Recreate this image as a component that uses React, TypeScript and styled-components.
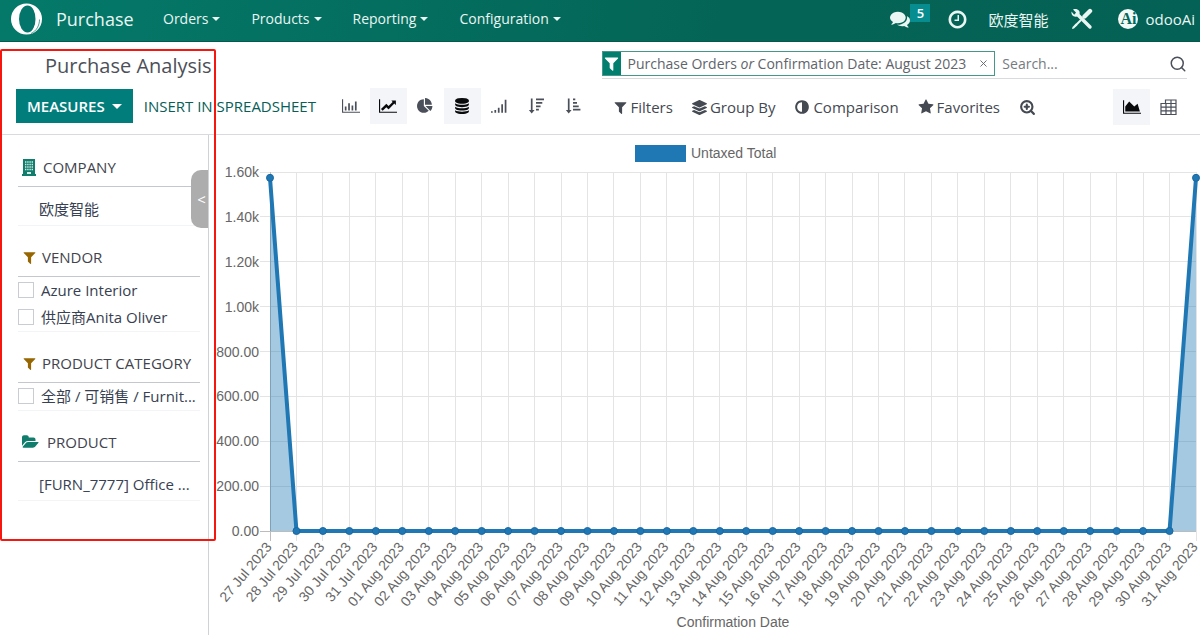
import React, { useLayoutEffect, useRef, useState } from "react";
import styled, { createGlobalStyle, css } from "styled-components";
import { FaLayerGroup } from "react-icons/fa";
import { Search, X, ZoomIn } from "lucide-react";

const GlobalStyle = createGlobalStyle`
  *, *::before, *::after { box-sizing: border-box; }
  body { margin: 0; background: #fff; color: #374151; font-family: "Open Sans", "Noto Sans CJK SC", sans-serif; font-size: 15px; }
  button, input { font: inherit; color: inherit; }
  button { border: 0; background: none; padding: 0; cursor: pointer; }
  svg { display: block; flex: none; }
`;

const FA = {
  filter: "M1595 295q17 41-14 70l-493 493v742q0 42-39 59-13 5-25 5-27 0-45-19l-256-256q-19-19-19-45v-486l-493-493q-31-29-14-70 17-39 59-39h1280q42 0 59 39z",
  database: "M896 768q237 0 443-43t325-127v170q0 69-103 128t-280 93.5-385 34.5-385-34.5-280-93.5-103-128v-170q119 84 325 127t443 43zm0 768q237 0 443-43t325-127v170q0 69-103 128t-280 93.5-385 34.5-385-34.5-280-93.5-103-128v-170q119 84 325 127t443 43zm0-384q237 0 443-43t325-127v170q0 69-103 128t-280 93.5-385 34.5-385-34.5-280-93.5-103-128v-170q119 84 325 127t443 43zm0-1152q208 0 385 34.5t280 93.5 103 128v128q0 69-103 128t-280 93.5-385 34.5-385-34.5-280-93.5-103-128v-128q0-69 103-128t280-93.5 385-34.5z",
  line: "M2048 1536v128h-2048v-1536h128v1408h1920zm-128-1248v435q0 21-19.5 29.5t-35.5-7.5l-121-121-633 633q-10 10-23 10t-23-10l-233-233-416 416-192-192 585-585q10-10 23-10t23 10l233 233 464-464-121-121q-16-16-7.5-35.5t29.5-19.5h435q14 0 23 9t9 23z",
  bar: "M512 960v448h-192v-448h192zm384-384v832h-192v-832h192zm1152 960v128h-2048v-1536h128v1408h1920zm-768-704v576h-192v-576h192zm384-448v1024h-192v-1024h192z",
  area: "M2048 1536v128h-2048v-1536h128v1408h1920zm-384-1024l256 896h-1664v-576l448-576 576 576z",
  pie: "M768 890l546 546q-106 108-247.5 168t-298.5 60q-209 0-385.5-103t-279.5-279.5-103-385.5 103-385.5 279.5-279.5 385.5-103v762zm187 6h773q0 157-60 298.5t-168 247.5zm709-128h-768v-768q209 0 385.5 103t279.5 279.5 103 385.5z",
  signal: "M0 1472h192v192h-192zM384 1344h192v320h-192zM768 1088h192v576h-192zM1152 704h192v960h-192zM1536 192h192v1472h-192z",
  sortDesc: "M320 64h192v1280h224l-320 384-320-384h224zM896 64h896v192h-896zM896 448h704v192h-704zM896 832h512v192h-512zM896 1216h320v192h-320z",
  sortAsc: "M320 64h192v1280h224l-320 384-320-384h224zM896 64h256v192h-256zM896 448h448v192h-448zM896 832h640v192h-640zM896 1216h832v192h-832z",
  comments: "M1408 768q0 139-94 257t-256.5 186.5-353.5 68.5q-86 0-176-16-124 88-278 128-36 9-86 16h-3q-11 0-20.5-8t-11.5-21q-1-3-1-6.5t.5-6.5 2-6l2.5-5 3.5-5.5 4-5 4.5-5 4-4.5q5-6 23-25t26-29.5 22.5-29 25-38.5 20.5-44q-124-72-195-177t-71-224q0-139 94-257t256.5-186.5 353.5-68.5 353.5 68.5 256.5 186.5 94 257zm384 256q0 120-71 224.5t-195 176.5q10 24 20.5 44t25 38.5 22.5 29 26 29.5 23 25q1 1 4 4.5t4.5 5 4 5 3.5 5.5l2.5 5 2 6 .5 6.5-1 6.5q-3 14-13 22t-22 7q-50-7-86-16-154-40-278-128-90 16-176 16-271 0-472-132 58 4 88 4 161 0 309-45t264-129q125-92 192-212t67-254q0-77-23-152 129 71 204 178t75 230z",
  clock: "M1024 544v448q0 14-9 23t-23 9h-320q-14 0-23-9t-9-23v-64q0-14 9-23t23-9h224v-352q0-14 9-23t23-9h64q14 0 23 9t9 23zm416 352q0-148-73-273t-198-198-273-73-273 73-198 198-73 273 73 273 198 198 273 73 273-73 198-198 73-273zm224 0q0 209-103 385.5t-279.5 279.5-385.5 103-385.5-103-279.5-279.5-103-385.5 103-385.5 279.5-279.5 385.5-103 385.5 103 279.5 279.5 103 385.5z",
  star: "M1728 647q0 22-26 48l-363 354 86 500q1 7 1 20 0 21-10.5 35.5t-30.5 14.5q-19 0-40-12l-449-236-449 236q-22 12-40 12-21 0-31.5-14.5t-10.5-35.5q0-6 2-20l86-500-364-354q-25-27-25-48 0-37 56-46l502-73 225-455q19-41 49-41t49 41l225 455 502 73q56 9 56 46z",
  adjust: "M896 1440v-1088q-148 0-273 73t-198 198-73 273 73 273 198 198 273 73zm768-544q0 209-103 385.5t-279.5 279.5-385.5 103-385.5-103-279.5-279.5-103-385.5 103-385.5 279.5-279.5 385.5-103 385.5 103 279.5 279.5 103 385.5z",
  folder: "M1879 952q0 31-31 66l-336 396q-43 51-120.5 86.5t-143.5 35.5h-1088q-34 0-60.5-13t-26.5-43q0-31 31-66l336-396q43-51 120.5-86.5t143.5-35.5h1088q34 0 60.5 13t26.5 43zm-343-344v160h-832q-94 0-197 47.5t-164 119.5l-337 396-5 6q0-4-.5-12.5t-.5-12.5v-960q0-92 66-158t158-66h320q92 0 158 66t66 158v32h544q92 0 158 66t66 158z",
};

function Icon({ name, size = 16, color = "currentColor" }: { name: keyof typeof FA; size?: number; color?: string }) {
  const wide = ["line", "bar", "area", "folder"].includes(name);
  return (
    <svg width={wide ? Math.round((size * 8) / 7) : size} height={size} viewBox={`0 0 ${wide ? 2048 : 1792} 1792`} fill={color} aria-hidden="true">
      <path d={FA[name]} />
    </svg>
  );
}

const Page = styled.div`
  position: relative;
  min-height: 100vh;
  display: flex;
  flex-direction: column;
  overflow: hidden;
`;

const NavBar = styled.header`
  display: flex;
  align-items: center;
  height: 42px;
  padding: 0 5px 3px 10px;
  color: #eaf6f3;
  background: linear-gradient(100deg, #04796a, #046556 60%, #046155);
  border-bottom: 1px solid #04594d;
  white-space: nowrap;
`;

const Brand = styled.a`
  display: flex;
  align-items: center;
  gap: 13px;
  width: 148px;
  color: inherit;
  text-decoration: none;
  font-size: 18px;
`;

const Menu = styled.nav`
  display: flex;
  gap: 21px;
  flex: 1;
  font-size: 14px;
`;

const MenuButton = styled.button`
  display: flex;
  align-items: center;
  gap: 4px;
  padding: 0 5px;
  line-height: 32px;
`;

const Caret = styled.span<{ $size?: number }>`
  border: ${(p) => p.$size ?? 4}px solid transparent;
  border-top-color: currentColor;
  border-bottom: 0;
`;

const SysTray = styled.div`
  display: flex;
  align-items: center;
  color: #eaf6f3;
`;

const TrayButton = styled.button<{ $gap: number }>`
  display: flex;
  align-items: center;
  gap: 7px;
  margin-left: ${(p) => p.$gap}px;
`;

const Messages = styled.button`
  display: flex;
  align-items: center;
`;

const Count = styled.span`
  align-self: flex-start;
  width: 20px;
  margin-top: -5px;
  color: #fff;
  background: #078c8f;
  font-size: 13px;
  font-weight: 600;
  line-height: 18px;
  text-align: center;
`;

const ControlPanel = styled.section`
  display: flex;
  justify-content: space-between;
  height: 93px;
  padding: 8px 13px 8px 16px;
  border-bottom: 1px solid #d8dadd;
`;

const PanelSide = styled.div<{ $wide?: boolean }>`
  display: flex;
  flex-direction: column;
  ${(p) => p.$wide && css`
    width: 50%;
    padding-top: 1px;
  `}
`;

const Title = styled.h1`
  margin: 0 0 6px;
  padding-left: 29px;
  color: #4c5058;
  font-size: 20px;
  font-weight: 400;
  line-height: 32px;
`;

const Tools = styled.div`
  display: flex;
  align-items: center;
`;

const Measures = styled.button`
  display: flex;
  align-items: center;
  gap: 7px;
  height: 34px;
  padding: 0 11px;
  color: #fff;
  background: #017e7c;
  font-weight: 600;
`;

const Spreadsheet = styled.button`
  width: 200px;
  padding-left: 11px;
  color: #066058;
  font-weight: 500;
  text-align: left;
  white-space: nowrap;
`;

const ToolButton = styled.button<{ $active?: boolean }>`
  display: grid;
  place-items: center;
  width: 37px;
  height: 36px;
  color: ${(p) => (p.$active ? "#090a0c" : "#4a4f59")};
  background: ${(p) => (p.$active ? "#f4f5f9" : "transparent")};
`;

const SearchBar = styled.div`
  display: flex;
  align-items: center;
  height: 28px;
  padding-bottom: 2px;
  border-bottom: 1px solid #d8dadd;
  color: #60646b;
  font-size: 14px;
`;

const Facet = styled.div`
  display: flex;
  align-items: center;
  height: 25px;
  padding-right: 5px;
  border: 1px solid #45978c;
  white-space: nowrap;
`;

const FacetIcon = styled.span`
  display: grid;
  place-items: center;
  align-self: stretch;
  width: 18px;
  margin-right: 7px;
  color: #fff;
  background: #017e6d;
`;

const FacetRemove = styled.button`
  margin-left: 12px;
`;

const SearchInput = styled.input`
  flex: 1;
  min-width: 0;
  padding: 0 7px;
  border: 0;
  outline: 0;
  background: none;
  &::placeholder { color: #777b81; }
`;

const SearchTools = styled.div`
  display: flex;
  align-items: center;
  gap: 19px;
  margin-top: 10px;
  padding-left: 11px;
`;

const SearchOption = styled.button`
  display: flex;
  align-items: center;
  gap: 3px;
  color: #444952;
  font-weight: 500;
  white-space: nowrap;
`;

const Views = styled.div`
  display: flex;
  margin-left: auto;
`;

const Content = styled.main`
  display: flex;
  flex: 1;
`;

const Sidebar = styled.aside`
  position: relative;
  flex: none;
  width: 209px;
  padding: 17px 8px 0 18px;
  border-right: 1px solid #cfd2d6;
`;

const Group = styled.section`
  margin-bottom: 16px;
`;

const GroupTitle = styled.h2<{ $gap: number }>`
  display: flex;
  align-items: center;
  gap: ${(p) => p.$gap}px;
  height: 35px;
  margin: 0;
  padding: 0 0 4px 4px;
  border-bottom: 1px solid #c4c7cb;
  color: #3f444d;
  font-size: 15px;
  font-weight: 500;
  white-space: nowrap;
`;

const GroupBody = styled.div`
  border-bottom: 1px solid #f3f4f5;
`;

const GroupItem = styled.button`
  display: block;
  width: 100%;
  padding: 7px 0 1px 21px;
  line-height: 30px;
  text-align: left;
  white-space: nowrap;
`;

const CheckRow = styled.label`
  display: flex;
  align-items: center;
  gap: 7px;
  height: 27px;
  padding-bottom: 2px;
  white-space: nowrap;
`;

const Check = styled.input`
  appearance: none;
  flex: none;
  width: 16px;
  height: 16px;
  margin: 0;
  border: 1px solid #c9ccd0;
  background: #fff;
`;

const Collapse = styled.button`
  position: absolute;
  top: 35px;
  right: 0;
  width: 17px;
  height: 58px;
  padding-left: 4px;
  border-radius: 10px 0 0 10px;
  color: #fff;
  background: #adadad;
`;

const Highlight = styled.div`
  position: absolute;
  top: 49px;
  left: 0;
  width: 216px;
  height: 492px;
  border: 2px solid #f5170f;
  border-radius: 2px;
  pointer-events: none;
`;

const ChartArea = styled.div`
  flex: 1;
  min-width: 0;
  font-family: "Liberation Sans", Arial, sans-serif;
  font-size: 14px;
`;

const pad = (n: number) => String(n).padStart(2, "0");
const days = [
  ...[27, 28, 29, 30, 31].map((d) => `${d} Jul 2023`),
  ...Array.from({ length: 31 }, (_, i) => `${pad(i + 1)} Aug 2023`),
];
const totals = days.map((_, i) => (i === 0 || i === days.length - 1 ? 1574 : 0));
const ticks = [1600, 1400, 1200, 1000, 800, 600, 400, 200, 0];
const tickLabel = (v: number) => (v >= 1000 ? `${(v / 1000).toFixed(2)}k` : v.toFixed(2));

function Chart() {
  const box = useRef<HTMLDivElement>(null);
  const [width, setWidth] = useState(991);
  useLayoutEffect(() => {
    const node = box.current!;
    const update = () => setWidth(node.clientWidth);
    update();
    const observer = new ResizeObserver(update);
    observer.observe(node);
    return () => observer.disconnect();
  }, []);

  const left = 61;
  const right = width - 4;
  const top = 37;
  const bottom = 396;
  const x = (i: number) => left + (i * (right - left)) / (days.length - 1);
  const y = (v: number) => bottom - (v * (bottom - top)) / 1600;
  const crisp = (n: number) => Math.floor(n) + 0.5;
  const points = totals.map((v, i) => `${x(i)},${y(v)}`).join(" ");
  const middle = (left + right) / 2;

  return (
    <ChartArea ref={box}>
      <svg width={width} height={500} role="img" aria-label="Untaxed Total by Confirmation Date">
        <rect x={middle - 98} y={10} width={51} height={17} fill="#1f77b4" />
        <text x={middle - 42} y={23} fill="#666">Untaxed Total</text>
        {ticks.map((v) => (
          <g key={v}>
            <line x1={left - 10} x2={right} y1={crisp(y(v))} y2={crisp(y(v))} stroke={v ? "#e4e4e4" : "#bcbcbc"} />
            <text x={left - 11} y={y(v) + 5} fill="#666" textAnchor="end">{tickLabel(v)}</text>
          </g>
        ))}
        {days.map((day, i) => (
          <g key={day}>
            <line x1={crisp(x(i))} x2={crisp(x(i))} y1={top} y2={bottom + 10} stroke={i ? "#e4e4e4" : "#bcbcbc"} />
            <text transform={`translate(${x(i)} ${bottom + 13}) rotate(-50)`} x={-1} y={4} fill="#666" textAnchor="end">{day}</text>
          </g>
        ))}
        <polygon points={`${left},${bottom} ${points} ${right},${bottom}`} fill="#1f77b4" fillOpacity={0.4} />
        <polyline points={points} fill="none" stroke="#1f77b4" strokeWidth={4} strokeLinejoin="round" />
        {totals.map((v, i) => (
          <circle key={i} cx={x(i)} cy={y(v)} r={3.5} fill="#1f77b4" stroke="#1a68a0" />
        ))}
        <text x={middle} y={492} fill="#666" textAnchor="middle">Confirmation Date</text>
      </svg>
    </ChartArea>
  );
}

function BuildingIcon() {
  return (
    <svg width="14" height="17" viewBox="0 0 14 17" aria-hidden="true">
      <path d="M1 0h12v15h1v2H0v-2h1z" fill="#117e6d" />
      <path d="M3 3h8M3 5.5h8M3 8h8M3 10.5h8" stroke="#d3ebe7" strokeWidth="1.3" strokeDasharray="1.4 .8" />
      <path d="M5 13h4v2H5z" fill="#d3ebe7" />
    </svg>
  );
}

function PivotIcon() {
  return (
    <svg width="17" height="17" viewBox="0 0 17 17" fill="none" stroke="#4a4f59" strokeWidth="1.2" aria-hidden="true">
      <path d="M5.500 4.500V1h10.500v14.500h-15v-11h15M1 8.200h15M1 11.800h15M6 4.500v11M11 1v14.500" />
    </svg>
  );
}

function CrossedTools() {
  return (
    <svg width="22" height="22" viewBox="0 0 22 22" fill="none" stroke="currentColor" aria-hidden="true">
      <path d="M6 6l13 13" strokeWidth="3.4" strokeLinecap="round" />
      <path d="M2 1.500l3 3-.5 1.500-1.500.5-2.500-3C0 7 2.500 9.500 6 8.500L8.500 6C9.500 3 6.500 0 2 1.500z" fill="currentColor" stroke="none" />
      <path d="M13.500 8.500l5.500-5.500" strokeWidth="4.4" strokeLinecap="round" />
      <path d="M10 12l-6 6" strokeWidth="2" />
      <path d="M5 15.500l1.500 1.500-3.500 3.500-2 .5.5-2z" fill="currentColor" stroke="none" />
    </svg>
  );
}

function BrandMark() {
  return (
    <svg width="33" height="32" viewBox="0 0 33 32" aria-hidden="true">
      <circle cx="16.500" cy="16" r="15.500" fill="#fff" />
      <ellipse cx="17.500" cy="16" rx="8.500" ry="13.500" fill="#04756a" />
      <path d="M21 2.500c5 3 7 8 7 13.500s-2.500 11-8 14c4-4 5.500-8.500 5.500-14S24 6.500 21 2.500z" fill="#fff" />
      <path d="M21 30.500c5.500-2.500 8.500-8 8.500-14" fill="none" stroke="#04756a" strokeWidth=".7" />
    </svg>
  );
}

const Avatar = styled.span`
  display: grid;
  place-items: center;
  width: 20px;
  height: 20px;
  border-radius: 50%;
  color: #04695b;
  background: #f2faf8;
  font-family: "Liberation Serif", serif;
  font-size: 16px;
  font-weight: 700;
  line-height: 20px;
`;

const graphTools: { name: keyof typeof FA; label: string; active?: boolean }[] = [
  { name: "bar", label: "Bar Chart" },
  { name: "line", label: "Line Chart", active: true },
  { name: "pie", label: "Pie Chart" },
  { name: "database", label: "Stacked", active: true },
  { name: "signal", label: "Cumulative" },
  { name: "sortDesc", label: "Descending" },
  { name: "sortAsc", label: "Ascending" },
];

export default function App() {
  return (
    <Page>
      <GlobalStyle />
      <NavBar>
        <Brand href="#">
          <BrandMark />
          Purchase
        </Brand>
        <Menu>
          {["Orders", "Products", "Reporting", "Configuration"].map((item) => (
            <MenuButton key={item}>{item}<Caret /></MenuButton>
          ))}
        </Menu>
        <SysTray>
          <Messages aria-label="Messages"><Icon name="comments" size={20} /><Count>5</Count></Messages>
          <TrayButton $gap={17} aria-label="Activities"><Icon name="clock" size={21} /></TrayButton>
          <TrayButton $gap={20}>欧度智能</TrayButton>
          <TrayButton $gap={23} aria-label="Developer tools"><CrossedTools /></TrayButton>
          <TrayButton $gap={25}><Avatar>Ai</Avatar>odooAi</TrayButton>
        </SysTray>
      </NavBar>
      <ControlPanel>
        <PanelSide>
          <Title>Purchase Analysis</Title>
          <Tools>
            <Measures>MEASURES <Caret $size={5} /></Measures>
            <Spreadsheet>INSERT IN SPREADSHEET</Spreadsheet>
            {graphTools.map((t) => (
              <ToolButton key={t.name} $active={t.active} aria-label={t.label}><Icon name={t.name} size={16} /></ToolButton>
            ))}
          </Tools>
        </PanelSide>
        <PanelSide $wide>
          <SearchBar>
            <Facet>
              <FacetIcon><Icon name="filter" size={17} /></FacetIcon>
              <span>Purchase Orders <em>or</em> Confirmation Date: August 2023</span>
              <FacetRemove aria-label="Remove"><X size={11} /></FacetRemove>
            </Facet>
            <SearchInput aria-label="Search" placeholder="Search..." />
            <Search size={18} color="#4a4f59" />
          </SearchBar>
          <SearchTools>
            <SearchOption><Icon name="filter" size={15} />Filters</SearchOption>
            <SearchOption><FaLayerGroup size={15} />Group By</SearchOption>
            <SearchOption><Icon name="adjust" size={16} />Comparison</SearchOption>
            <SearchOption><Icon name="star" size={16} />Favorites</SearchOption>
            <SearchOption aria-label="Zoom"><ZoomIn size={17} strokeWidth={3} /></SearchOption>
            <Views>
              <ToolButton $active aria-label="Graph"><Icon name="area" size={16} /></ToolButton>
              <ToolButton aria-label="Pivot"><PivotIcon /></ToolButton>
            </Views>
          </SearchTools>
        </PanelSide>
      </ControlPanel>
      <Content>
        <Sidebar>
          <Group>
            <GroupTitle $gap={7}><BuildingIcon />COMPANY</GroupTitle>
            <GroupBody><GroupItem>欧度智能</GroupItem></GroupBody>
          </Group>
          <Group>
            <GroupTitle $gap={5}><Icon name="filter" size={15} color="#966600" />VENDOR</GroupTitle>
            <GroupBody>
              <CheckRow><Check type="checkbox" />Azure Interior</CheckRow>
              <CheckRow><Check type="checkbox" />供应商Anita Oliver</CheckRow>
            </GroupBody>
          </Group>
          <Group>
            <GroupTitle $gap={5}><Icon name="filter" size={15} color="#966600" />PRODUCT CATEGORY</GroupTitle>
            <GroupBody>
              <CheckRow><Check type="checkbox" />全部 / 可销售 / Furnit...</CheckRow>
            </GroupBody>
          </Group>
          <Group>
            <GroupTitle $gap={7}><Icon name="folder" size={16} color="#117e6d" />PRODUCT</GroupTitle>
            <GroupBody><GroupItem>[FURN_7777] Office ...</GroupItem></GroupBody>
          </Group>
          <Collapse aria-label="Collapse sidebar">&lt;</Collapse>
        </Sidebar>
        <Chart />
      </Content>
      <Highlight />
    </Page>
  );
}
